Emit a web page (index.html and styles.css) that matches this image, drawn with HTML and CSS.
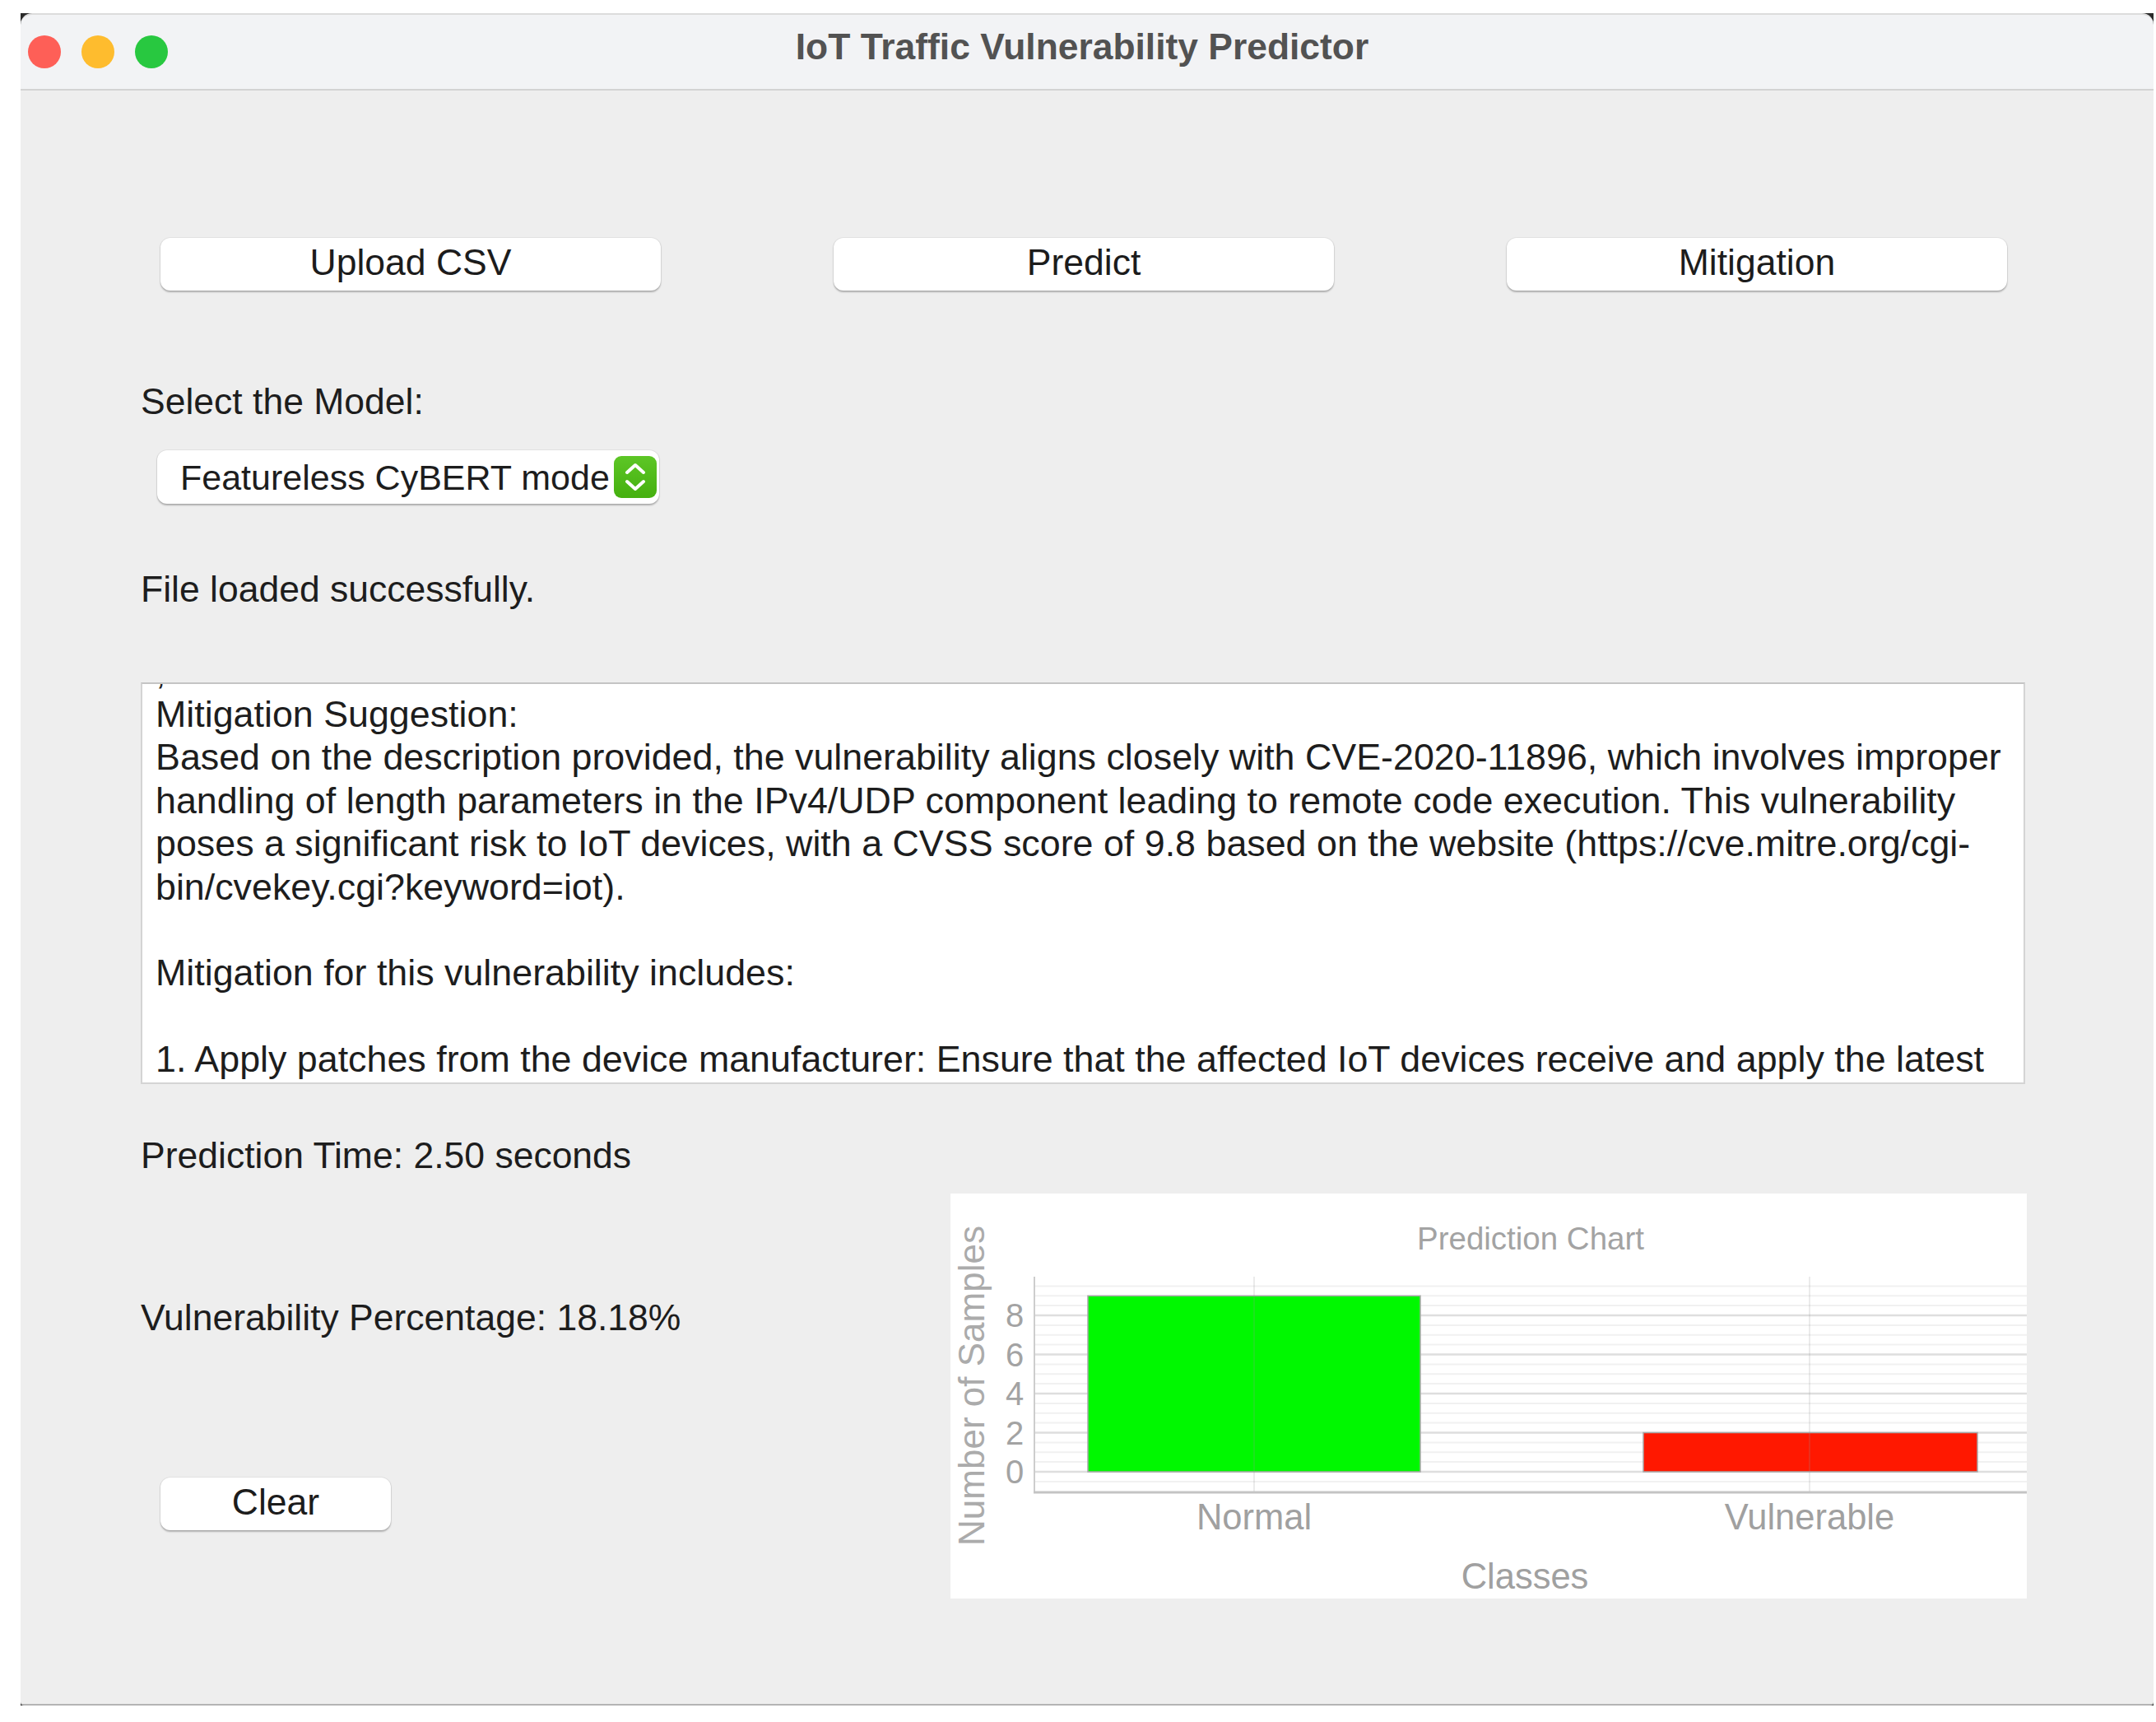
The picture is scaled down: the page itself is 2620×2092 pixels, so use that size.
FILE: index.html
```html
<!DOCTYPE html>
<html lang="en">
<head>
<meta charset="utf-8">
<title>IoT Traffic Vulnerability Predictor</title>
<link rel="stylesheet" href="styles.css">
</head>
<body>
<div class="window">
  <div class="titlebar">
    <div class="lights">
      <span class="light red"></span>
      <span class="light yellow"></span>
      <span class="light green"></span>
    </div>
    <div class="title">IoT Traffic Vulnerability Predictor</div>
    <div class="spacer"></div>
  </div>
  <div class="content">
    <div class="toolbar">
      <button class="btn">Upload CSV</button>
      <button class="btn">Predict</button>
      <button class="btn">Mitigation</button>
    </div>

    <div class="label label-model">Select the Model:</div>

    <div class="combo">
      <span class="combo-text">Featureless CyBERT model</span>
      <span class="stepper">
        <svg width="52" height="51" viewBox="0 0 52 51">
          <path d="M16 20 L26 11 L36 20" fill="none" stroke="#fff" stroke-width="4" stroke-linecap="round" stroke-linejoin="round"/>
          <path d="M16 31 L26 40 L36 31" fill="none" stroke="#fff" stroke-width="4" stroke-linecap="round" stroke-linejoin="round"/>
        </svg>
      </span>
    </div>

    <div class="label label-status">File loaded successfully.</div>

    <div class="textbox">
      <div class="textbox-inner">
        <div class="tline">,</div>
        <div class="tline">Mitigation Suggestion:</div>
        <div class="tline">Based on the description provided, the vulnerability aligns closely with CVE-2020-11896, which involves improper</div>
        <div class="tline">handling of length parameters in the IPv4/UDP component leading to remote code execution. This vulnerability</div>
        <div class="tline">poses a significant risk to IoT devices, with a CVSS score of 9.8 based on the website (https://cve.mitre.org/cgi-</div>
        <div class="tline">bin/cvekey.cgi?keyword=iot).</div>
        <div class="tline"> </div>
        <div class="tline">Mitigation for this vulnerability includes:</div>
        <div class="tline"> </div>
        <div class="tline">1. Apply patches from the device manufacturer: Ensure that the affected IoT devices receive and apply the latest</div>
      </div>
    </div>

    <div class="label label-time">Prediction Time: 2.50 seconds</div>

    <div class="lower">
      <div class="lower-left">
        <div class="label label-vuln">Vulnerability Percentage: 18.18%</div>
        <button class="btn btn-clear">Clear</button>
      </div>
      <div class="chart">
        <svg width="1308" height="492" viewBox="0 0 1308 492">
          <rect x="0" y="0" width="1308" height="492" fill="#ffffff"/>
          <g class="grid-minor">
            <line x1="102" x2="1308" y1="349.9" y2="349.9"/>
            <line x1="102" x2="1308" y1="326.1" y2="326.1"/>
            <line x1="102" x2="1308" y1="314.3" y2="314.3"/>
            <line x1="102" x2="1308" y1="302.4" y2="302.4"/>
            <line x1="102" x2="1308" y1="278.6" y2="278.6"/>
            <line x1="102" x2="1308" y1="266.8" y2="266.8"/>
            <line x1="102" x2="1308" y1="254.9" y2="254.9"/>
            <line x1="102" x2="1308" y1="231.1" y2="231.1"/>
            <line x1="102" x2="1308" y1="219.3" y2="219.3"/>
            <line x1="102" x2="1308" y1="207.4" y2="207.4"/>
            <line x1="102" x2="1308" y1="183.6" y2="183.6"/>
            <line x1="102" x2="1308" y1="171.8" y2="171.8"/>
            <line x1="102" x2="1308" y1="159.9" y2="159.9"/>
            <line x1="102" x2="1308" y1="136.1" y2="136.1"/>
            <line x1="102" x2="1308" y1="124.3" y2="124.3"/>
            <line x1="102" x2="1308" y1="112.4" y2="112.4"/>
          </g>
          <g class="grid-major">
            <line x1="102" x2="1308" y1="338" y2="338"/>
            <line x1="102" x2="1308" y1="290.5" y2="290.5"/>
            <line x1="102" x2="1308" y1="243" y2="243"/>
            <line x1="102" x2="1308" y1="195.5" y2="195.5"/>
            <line x1="102" x2="1308" y1="148" y2="148"/>
          </g>
          <rect class="bar" x="167" y="124.25" width="404" height="213.75" fill="#00f800"/>
          <rect class="bar" x="842" y="290.5" width="406" height="47.5" fill="#ff1800"/>
          <g class="grid-vert">
            <line x1="369" x2="369" y1="101" y2="363"/>
            <line x1="1044" x2="1044" y1="101" y2="363"/>
          </g>
          <line class="axis" x1="102" x2="102" y1="101" y2="364"/>
          <line class="axis axis-x" x1="101" x2="1308" y1="363" y2="363"/>
          <text class="ct-title" x="705" y="54">Prediction Chart</text>
          <text class="ct-tick" x="78" y="148">8</text>
          <text class="ct-tick" x="78" y="195.5">6</text>
          <text class="ct-tick" x="78" y="243">4</text>
          <text class="ct-tick" x="78" y="290.5">2</text>
          <text class="ct-tick" x="78" y="338">0</text>
          <text class="ct-label" x="369" y="393">Normal</text>
          <text class="ct-label" x="1044" y="393">Vulnerable</text>
          <text class="ct-label" x="698" y="465">Classes</text>
          <text class="ct-ylabel" x="0" y="0" transform="translate(25 233.5) rotate(-90)">Number of Samples</text>
        </svg>
      </div>
    </div>
  </div>
</div>
</body>
</html>
```

FILE: styles.css
```css
html, body {
  margin: 0;
  padding: 0;
  background: #ffffff;
}

body {
  font-family: "Liberation Sans", Arial, sans-serif;
  color: #1d1d1d;
}

.window {
  margin: 16px 0 0 25px;
  width: 2592px;
  height: 2056px;
  display: flex;
  flex-direction: column;
  background: #2a2a2a;
}

/* ---------- title bar ---------- */
.titlebar {
  height: 90px;
  border-top: 2px solid #dcdcdc;
  border-bottom: 2px solid #d3d3d3;
  border-radius: 14px 14px 0 0;
  background: #f2f3f5;
  display: grid;
  grid-template-columns: 1fr auto 1fr;
  align-items: center;
}

.lights {
  display: flex;
  gap: 25px;
  padding-left: 9px;
}

.light {
  width: 40px;
  height: 40px;
  border-radius: 50%;
  display: block;
}

.light.red { background: #fe5f57; }
.light.yellow { background: #febc2e; }
.light.green { background: #28c840; }

.title {
  font-weight: 700;
  font-size: 44.4px;
  line-height: 52px;
  color: #525252;
  margin: 0 12px 12px 0;
  white-space: nowrap;
}

/* ---------- content ---------- */
.content {
  flex: 1;
  background: #eeeeee;
  border-bottom: 2px solid #b4b4b4;
  border-radius: 0 0 4px 4px;
  padding: 179px 0 0 146px;
  display: flex;
  flex-direction: column;
  align-items: flex-start;
}

.toolbar {
  display: flex;
  gap: 210px;
  margin-left: 24px;
}

.btn {
  width: 608px;
  height: 64px;
  padding: 0 0 4px 0;
  border: none;
  border-radius: 12px;
  background: #ffffff;
  box-shadow: 0 1.5px 2px rgba(0, 0, 0, 0.26), 0 0 0 1px rgba(0, 0, 0, 0.04);
  font-family: "Liberation Sans", Arial, sans-serif;
  font-size: 44.5px;
  line-height: 1;
  color: #1c1c1c;
}

.label {
  font-size: 44.5px;
  line-height: 52px;
  color: #1d1d1d;
  white-space: nowrap;
}

.label-model { margin-top: 108.5px; }

.combo {
  margin: 33.5px 0 0 20px;
  width: 610px;
  height: 65px;
  box-sizing: border-box;
  padding-left: 28px;
  background: #ffffff;
  border-radius: 12px;
  box-shadow: 0 1.5px 2px rgba(0, 0, 0, 0.26), 0 0 0 1px rgba(0, 0, 0, 0.04);
  display: flex;
  align-items: center;
}

.combo-text {
  width: 523px;
  overflow: hidden;
  white-space: nowrap;
  font-size: 43px;
  line-height: 52px;
  color: #1d1d1d;
}

.stepper {
  margin-left: auto;
  margin-right: 3px;
  width: 52px;
  height: 51px;
  border-radius: 9px;
  background: linear-gradient(#5dc626, #45b00f);
  display: block;
}

.stepper svg { display: block; }

.label-status { margin-top: 77.5px; }

.textbox {
  margin-top: 87.5px;
  width: 2290px;
  height: 488px;
  box-sizing: border-box;
  background: #ffffff;
  border: 2px solid #d4d4d4;
  border-top-color: #c4c4c4;
  padding-left: 16px;
  overflow: hidden;
}

.textbox-inner {
  margin-top: -42.4px;
}

.tline {
  font-size: 44.8px;
  line-height: 52.4px;
  height: 52.4px;
  white-space: pre;
  color: #1d1d1d;
}

.label-time { margin-top: 60.5px; }

.lower {
  display: flex;
  align-items: flex-start;
}

.lower-left {
  width: 984px;
  display: flex;
  flex-direction: column;
  align-items: flex-start;
}

.label-vuln { margin-top: 145px; }

.btn-clear {
  width: 280px;
  margin: 168.5px 0 0 24px;
}

.chart {
  margin-top: 20.5px;
  width: 1308px;
  height: 492px;
  background: #ffffff;
}

.chart svg { display: block; }

.grid-minor line { stroke: #f1f1f1; stroke-width: 2; }
.grid-major line { stroke: #dedede; stroke-width: 2.5; }
.grid-vert line { stroke: rgba(150, 150, 150, 0.25); stroke-width: 1.5; }
.bar { stroke: #a8a8a8; stroke-width: 1.5; }
.axis { stroke: #cdcdcd; stroke-width: 2; }
.axis-x { stroke: #c4c4c4; stroke-width: 3; }

.ct-title,
.ct-tick,
.ct-label,
.ct-ylabel {
  font-family: "Liberation Sans", Arial, sans-serif;
  text-anchor: middle;
  dominant-baseline: central;
}

.ct-title { font-size: 38.5px; fill: #a3a3a3; }
.ct-tick { font-size: 40px; fill: #a3a3a3; }
.ct-label { font-size: 43.5px; fill: #a0a0a0; }
.ct-ylabel { font-size: 44px; fill: #ababab; }
```
